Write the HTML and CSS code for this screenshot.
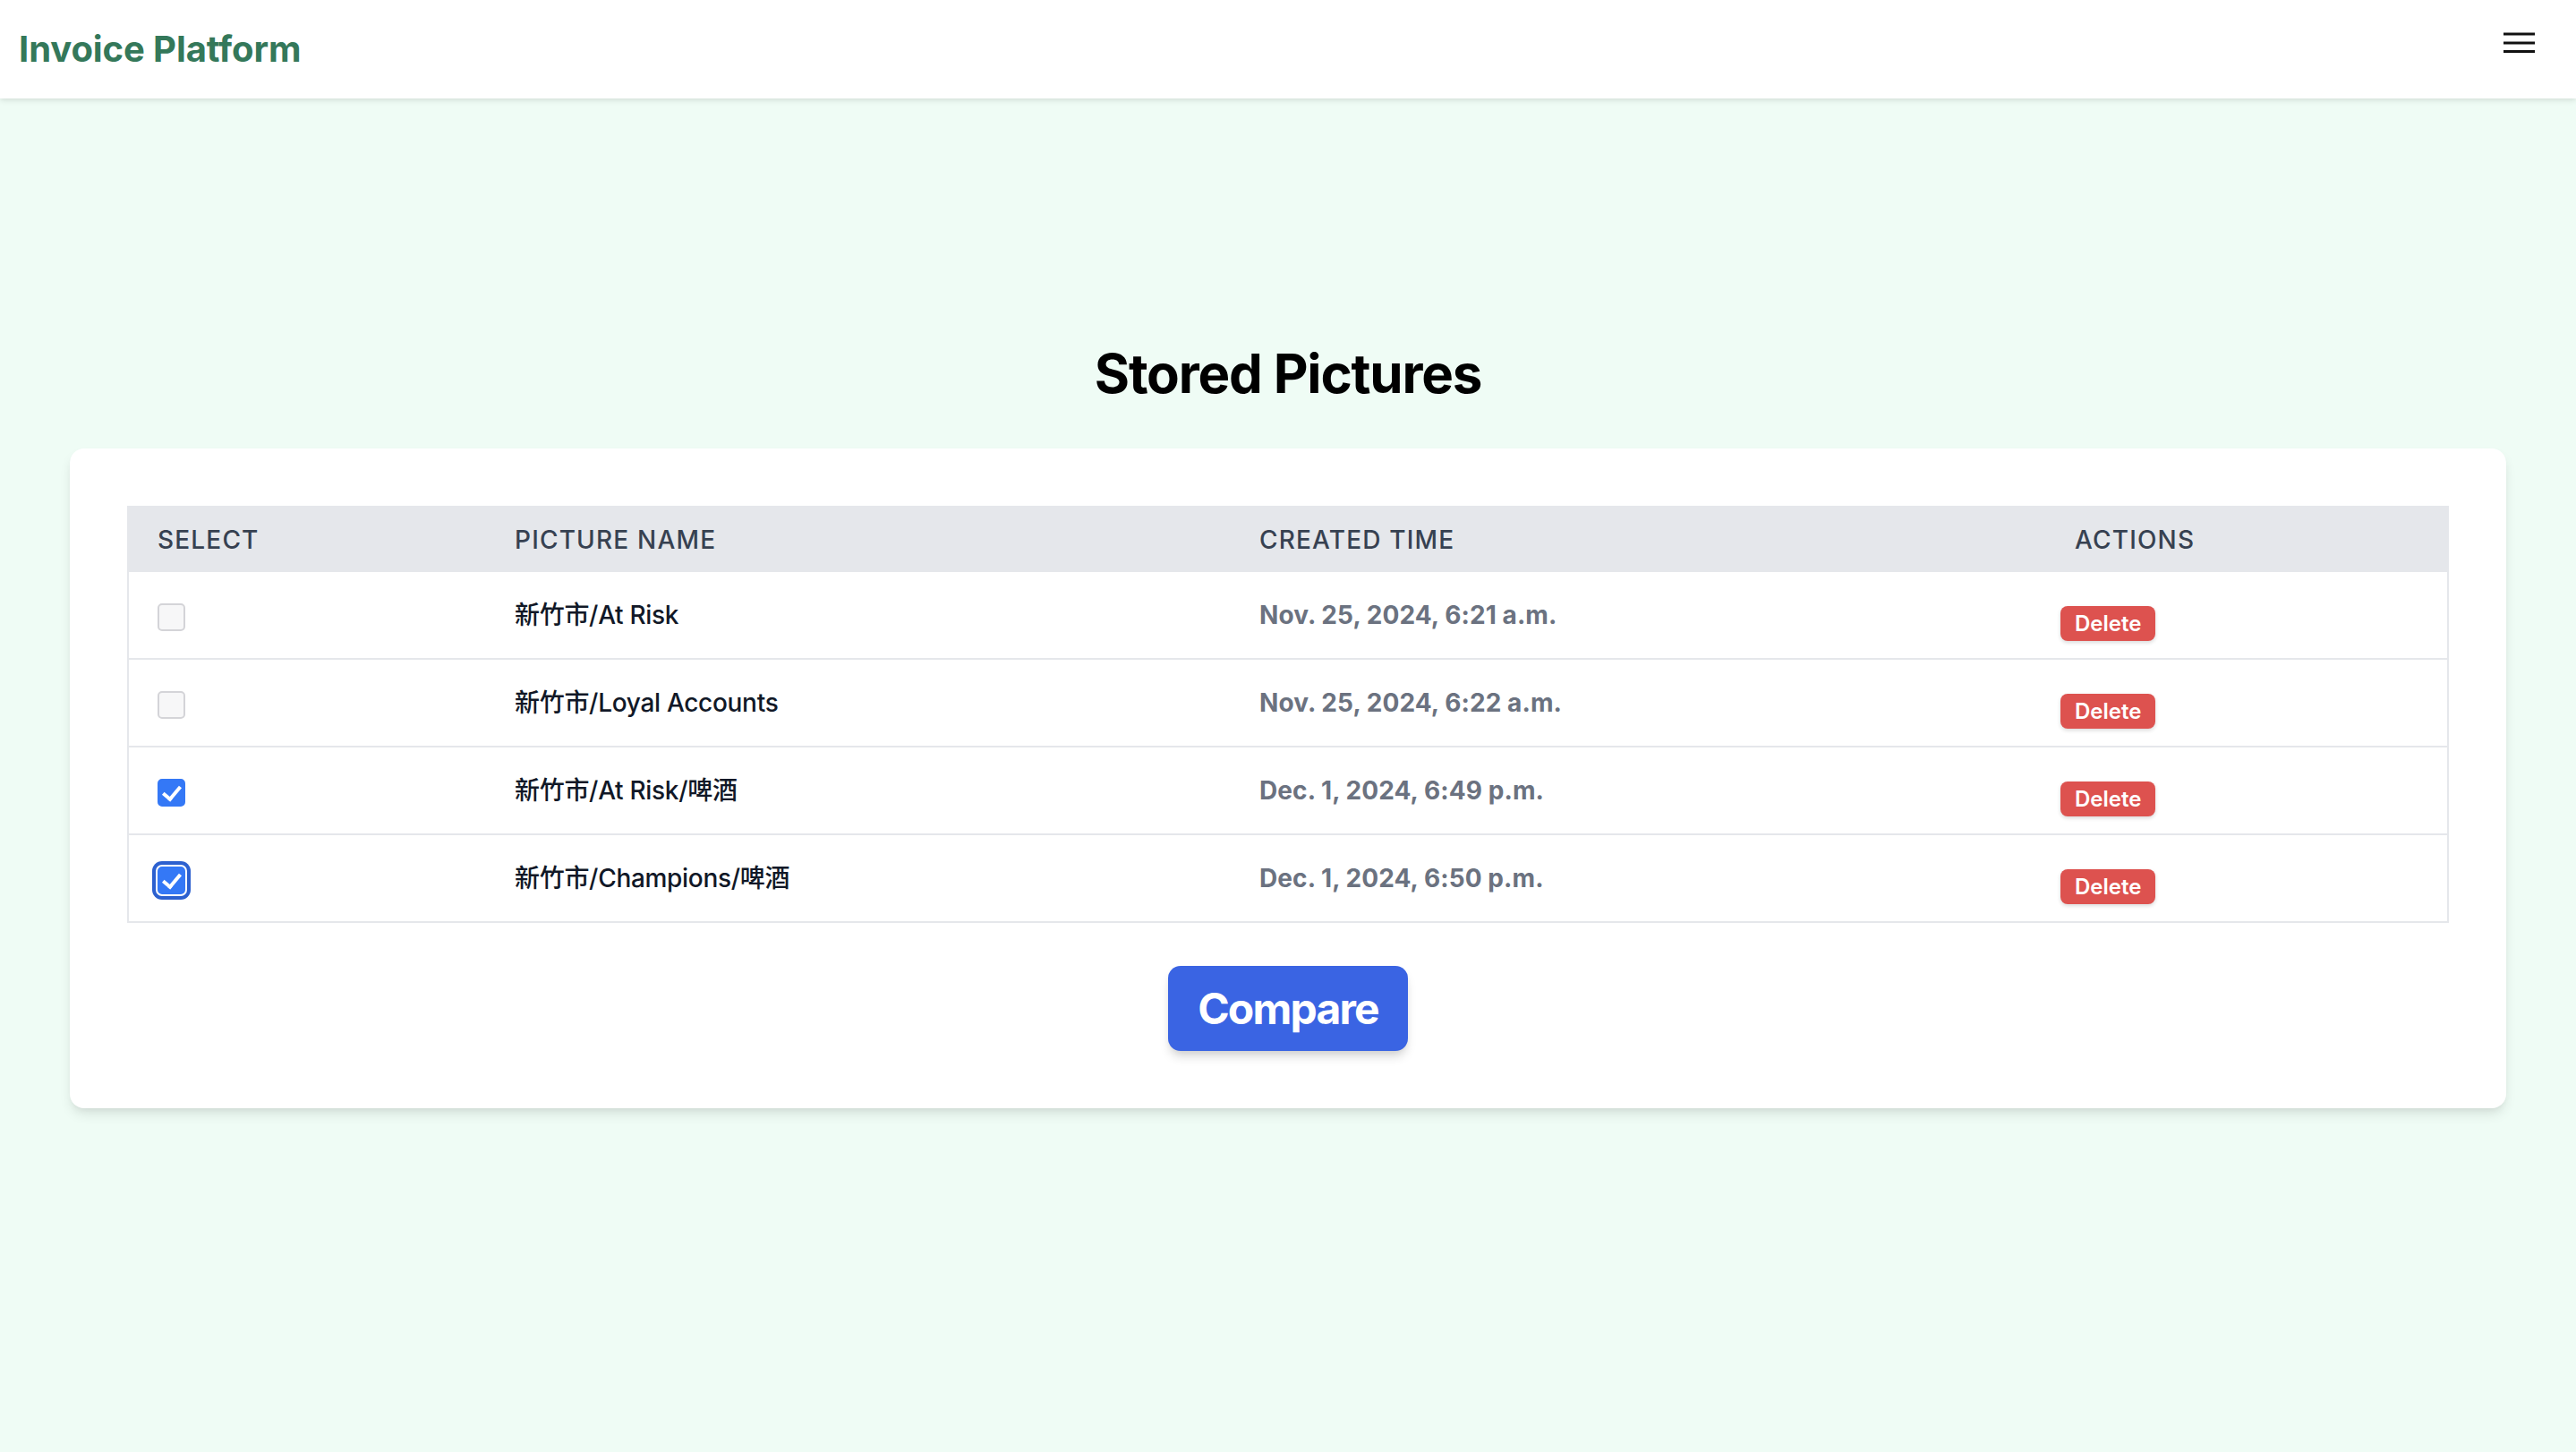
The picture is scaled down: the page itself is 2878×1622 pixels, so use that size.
FILE: index.html
```html
<!DOCTYPE html>
<html lang="zh-Hant">
<head>
<meta charset="utf-8">
<title>Invoice Platform</title>
<link rel="stylesheet" href="styles.css">
</head>
<body>
<header class="topbar">
  <div class="logo">Invoice Platform</div>
  <button class="menu-btn" aria-label="Menu">
    <svg width="48" height="48" viewBox="0 0 48 48" fill="none" stroke="#111" stroke-width="3">
      <line x1="6" y1="14" x2="41" y2="14"/>
      <line x1="6" y1="24" x2="41" y2="24"/>
      <line x1="6" y1="33.5" x2="41" y2="33.5"/>
    </svg>
  </button>
</header>
<main class="main">
  <h1 class="title">Stored Pictures</h1>
  <section class="card">
    <table class="pics">
      <thead>
        <tr>
          <th class="c1">Select</th>
          <th class="c2">Picture Name</th>
          <th class="c3">Created Time</th>
          <th class="c4">Actions</th>
        </tr>
      </thead>
      <tbody>
        <tr>
          <td><input type="checkbox" class="cb"></td>
          <td class="name">新竹市/At Risk</td>
          <td class="date">Nov. 25, 2024, 6:21 a.m.</td>
          <td class="act"><div class="act-wrap"><button class="del">Delete</button></div></td>
        </tr>
        <tr>
          <td><input type="checkbox" class="cb"></td>
          <td class="name">新竹市/Loyal Accounts</td>
          <td class="date">Nov. 25, 2024, 6:22 a.m.</td>
          <td class="act"><div class="act-wrap"><button class="del">Delete</button></div></td>
        </tr>
        <tr>
          <td><input type="checkbox" class="cb" checked></td>
          <td class="name">新竹市/At Risk/啤酒</td>
          <td class="date">Dec. 1, 2024, 6:49 p.m.</td>
          <td class="act"><div class="act-wrap"><button class="del">Delete</button></div></td>
        </tr>
        <tr>
          <td><input type="checkbox" class="cb cb-focus" checked></td>
          <td class="name">新竹市/Champions/啤酒</td>
          <td class="date">Dec. 1, 2024, 6:50 p.m.</td>
          <td class="act"><div class="act-wrap"><button class="del">Delete</button></div></td>
        </tr>
      </tbody>
    </table>
    <div class="compare-row">
      <button class="compare">Compare</button>
    </div>
  </section>
</main>
</body>
</html>
```

FILE: styles.css
```css
* { box-sizing: border-box; }
html, body {
  margin: 0;
  padding: 0;
}
body {
  min-height: 100vh;
  background: #effcf5;
  font-family: Inter, "Noto Sans CJK TC", "Noto Sans", sans-serif;
  color: #111827;
}
.topbar {
  height: 110px;
  background: #ffffff;
  display: flex;
  justify-content: space-between;
  align-items: center;
  padding: 0 39px 0 21px;
  box-shadow: 0 2px 6px rgba(0, 0, 0, 0.12);
  position: relative;
  z-index: 1;
}
.logo {
  font-size: 40px;
  line-height: 56px;
  font-weight: 700;
  color: #34785a;
  letter-spacing: -0.1px;
}
.menu-btn {
  align-self: flex-start;
  margin-top: 24px;
  padding: 0;
  border: 0;
  background: transparent;
  width: 48px;
  height: 48px;
  display: block;
}
.menu-btn svg { display: block; }
.main {
  padding: 271px 78px 60px;
}
.title {
  margin: 0 0 48px;
  text-align: center;
  font-size: 60px;
  line-height: 72px;
  font-weight: 700;
  color: #000;
  letter-spacing: -1.2px;
}
.card {
  background: #ffffff;
  border-radius: 16px;
  padding: 64px;
  box-shadow: 0 8px 14px -2px rgba(0, 0, 0, 0.10), 0 4px 8px -4px rgba(0, 0, 0, 0.08);
}
.pics {
  width: 100%;
  border-collapse: collapse;
  table-layout: fixed;
  border: 2px solid #e5e7eb;
}
.pics thead tr { background: #e5e7eb; }
.pics th {
  text-align: left;
  font-size: 28px;
  line-height: 40px;
  font-weight: 500;
  color: #374151;
  text-transform: uppercase;
  letter-spacing: 0.042em;
  padding: 16px 32px;
}
.c1 { width: 400px; }
.c2 { width: 832px; }
.c3 { width: 911px; }
.pics td {
  padding: 28px 32px 28px;
  font-size: 28px;
  line-height: 40px;
  vertical-align: middle;
  border-bottom: 2px solid #e5e7eb;
}
.pics td.name {
  font-weight: 500;
  color: #111827;
  letter-spacing: -0.3px;
}
.pics td.date {
  font-weight: 700;
  color: #6b7280;
  letter-spacing: 0.1px;
}
.pics td.act {
  vertical-align: top;
  padding: 38px 16px 19px;
}
.act-wrap { display: flex; }
.cb {
  appearance: none;
  -webkit-appearance: none;
  margin: 0;
  width: 31px;
  height: 31px;
  border: 2px solid #d4d4d8;
  border-radius: 5px;
  background: #f7f7f8;
  vertical-align: middle;
  display: inline-block;
  position: relative;
}
.cb:checked {
  background: #3478f6;
  border-color: #3478f6;
}
.cb:checked::after {
  content: "";
  position: absolute;
  left: 8px;
  top: 2px;
  width: 8px;
  height: 16px;
  border: solid #fff;
  border-width: 0 4px 4px 0;
  transform: rotate(40deg);
}
.cb-focus {
  box-shadow: 0 0 0 2px #ffffff, 0 0 0 6px #2c60cf;
}
.del {
  border: 0;
  background: #dd524f;
  color: #fff;
  font-family: Inter, sans-serif;
  font-size: 24px;
  line-height: 31px;
  font-weight: 600;
  letter-spacing: 0;
  padding: 4px 16px;
  border-radius: 8px;
  box-shadow: 0 2px 4px rgba(0, 0, 0, 0.15);
}
.compare-row {
  display: flex;
  justify-content: center;
  margin-top: 48px;
}
.compare {
  border: 0;
  background: #3a64e3;
  color: #fff;
  font-family: Inter, sans-serif;
  font-size: 48px;
  line-height: 63px;
  font-weight: 700;
  letter-spacing: -1.8px;
  padding: 16px 33px;
  border-radius: 14px;
  box-shadow: 0 8px 12px -2px rgba(0, 0, 0, 0.15), 0 4px 8px -4px rgba(0, 0, 0, 0.1);
}
```
